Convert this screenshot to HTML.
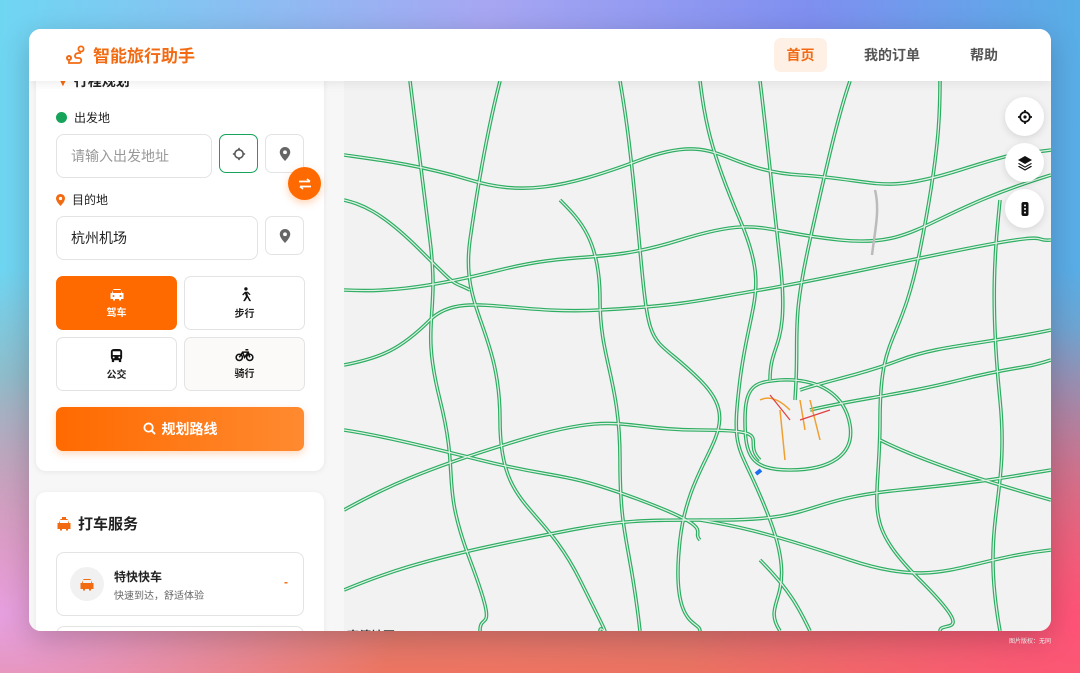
<!DOCTYPE html>
<html><head><meta charset="utf-8"><style>
*{box-sizing:border-box;margin:0;padding:0}
body{width:1080px;height:673px;overflow:hidden;position:relative;font-family:"Liberation Sans","Noto Sans CJK SC",sans-serif;
background:linear-gradient(180deg,rgba(0,0,0,0) 40%,rgba(245,110,80,.9) 100%),linear-gradient(90deg,#6fd6f2 0%,#a7a6f2 45%,#7f8ff0 75%,#58aee6 100%);}
.bl{position:absolute;left:0;bottom:0;width:400px;height:300px;background:radial-gradient(ellipse at 0% 80%,#e7a0e0 0%,rgba(231,160,224,0) 70%)}
.br{position:absolute;right:0;bottom:0;width:400px;height:350px;background:radial-gradient(ellipse at 100% 85%,#ff5277 0%,rgba(255,82,119,0) 70%)}
.win{position:absolute;left:29px;top:29px;width:1022px;height:602px;border-radius:12px;overflow:hidden;background:#f2f2f2;box-shadow:0 8px 30px rgba(0,0,0,.2)}
.hdr{position:absolute;left:0;top:0;width:100%;height:52px;background:#fff;box-shadow:0 2px 10px rgba(0,0,0,.08);z-index:5}
.logo{position:absolute;left:36px;top:13px;font-size:17px;font-weight:bold;color:#f26b12;display:flex;align-items:center;gap:6px}
.nav{position:absolute;top:9px;height:34px;line-height:34px;font-size:14px;color:#555;font-weight:bold;text-align:center}
.side{position:absolute;left:0;top:0;width:315px;height:100%;background:#f7f7f7;z-index:2}
.card{position:absolute;left:7px;width:288px;background:#fff;border-radius:10px;box-shadow:0 1px 6px rgba(0,0,0,.07)}
.lbl{position:absolute;font-size:12px;color:#222;display:flex;align-items:center;gap:7px}
.inp{position:absolute;height:44px;border:1px solid #e3e3e3;border-radius:8px;font-size:14px;line-height:42px;padding-left:14px;color:#222}
.ib{position:absolute;width:39px;height:39px;border:1px solid #e3e3e3;border-radius:7px;display:flex;align-items:center;justify-content:center}
.mode{position:absolute;width:121px;height:54px;border:1px solid #e3e3e3;border-radius:7px;font-size:10px;font-weight:bold;text-align:center;color:#222;padding-top:10px}
.mode svg{display:block;margin:0 auto 3px}
.fab{position:absolute;width:39px;height:39px;border-radius:50%;background:#fff;box-shadow:0 2px 8px rgba(0,0,0,.12);display:flex;align-items:center;justify-content:center;z-index:3}
</style></head><body>
<div class="bl"></div><div class="br"></div>
<div style="position:absolute;left:1009px;top:636px;font-size:6px;color:#fff">图片版权：无同</div>
<div class="win">
<svg style="position:absolute;left:0;top:0" width="1022" height="602" viewBox="29 29 1022 602">
<defs>
<g id="r" fill="none">
<path d="M344,155 C380,160 420,165 470,180 S560,190 640,160 S720,170 800,175 S880,195 960,170 S1020,155 1051,150"/>
<path d="M344,290 C380,292 420,290 500,270 S600,265 680,240 S760,232 840,240 S920,215 1051,175"/>
<path d="M344,365 C380,358 400,350 430,320 S510,315 600,310 S700,300 760,290 S860,270 960,250 S1030,242 1051,240"/>
<path d="M344,510 C380,490 420,470 520,440 S620,430 700,430 S740,440 760,460"/>
<path d="M344,590 C380,575 420,560 520,540 S620,520 720,520 S800,500 900,490 S1000,478 1051,470"/>
<path d="M700,520 C730,525 760,530 850,560 S960,560 1051,550"/>
<path d="M410,81 C415,120 420,160 430,240 S420,320 440,400 S440,480 470,560 S480,610 480,631"/>
<path d="M500,81 C490,120 480,170 470,240 S500,330 500,420 S540,500 580,580 S600,620 600,631"/>
<path d="M620,81 C625,110 630,140 640,250 S650,330 700,380 S690,450 680,540 S700,620 700,631"/>
<path d="M700,81 C705,120 710,150 740,220 S750,300 740,380 S740,440 770,520 S760,600 780,631"/>
<path d="M940,81 C940,110 940,150 920,250 S880,330 880,420 S860,520 920,580 S940,620 940,631"/>
<path d="M850,81 C840,110 830,150 810,240 S800,330 795,400"/>
<path d="M760,81 C765,120 770,170 780,260 S770,340 770,380"/>
<path d="M1000,200 C995,250 990,300 1000,400 S980,520 1000,631"/>
<path d="M780,380 C820,378 845,395 850,425 S830,470 790,470 S745,455 745,420 S755,382 780,380"/>
<path d="M344,430 C370,434 400,440 480,460 S560,470 640,500 S690,530 700,540"/>
<path d="M344,200 C360,204 380,210 420,250 S450,280 470,290"/>
<path d="M560,200 C580,220 600,240 600,300 S620,380 620,460 S630,540 640,631"/>
<path d="M800,390 C830,380 860,375 900,360 S980,345 1051,330"/>
<path d="M810,410 C850,400 900,395 960,380 S1020,370 1051,360"/>
<path d="M760,560 C790,590 800,610 810,631"/>
<path d="M880,440 C920,460 980,480 1051,500"/>
</g>
</defs>
<rect x="29" y="29" width="1022" height="602" fill="#f2f2f2"/>
<use href="#r" stroke="#2eae63" stroke-width="3.6"/>
<use href="#r" stroke="#e4f1e7" stroke-width="1.2"/>
<path d="M875,190 C880,210 875,230 872,255" stroke="#bbb" stroke-width="2.5" fill="none"/>
<path d="M760,400 C770,395 780,400 790,410 M780,410 L785,460 M800,400 L805,430 M810,400 L820,440" stroke="#f0a030" stroke-width="1.5" fill="none"/>
<path d="M770,395 L790,420 M800,420 L830,410" stroke="#e04040" stroke-width="1.2" fill="none"/>
<path d="M756,474 L761,470" stroke="#1a6ef0" stroke-width="4"/>
</svg>
<div style="position:absolute;left:318px;top:598px;font-size:12px;color:#333;font-weight:bold;z-index:1">高德地图</div>
<div class="fab" style="left:976px;top:68px"><svg width="16" height="16" viewBox="0 0 16 16"><circle cx="8" cy="8" r="4.8" stroke="#111" stroke-width="1.8" fill="none"/><circle cx="8" cy="8" r="1.6" fill="#111"/><path d="M8 1v3M8 12v3M1 8h3M12 8h3" stroke="#111" stroke-width="1.8"/></svg></div>
<div class="fab" style="left:976px;top:114px"><svg width="16" height="16" viewBox="0 0 16 16"><path d="M8 1L15 5 8 9 1 5z" fill="#111"/><path d="M2 8l6 3.5L14 8l1 .8-7 4-7-4z" fill="#111"/><path d="M2 10.8l6 3.5 6-3.5 1 .8-7 4-7-4z" fill="#111"/></svg></div>
<div class="fab" style="left:976px;top:160px"><svg width="16" height="16" viewBox="0 0 16 16"><rect x="4.5" y="1" width="7" height="14" rx="2" fill="#111"/><circle cx="8" cy="4.5" r="1" fill="#fff"/><circle cx="8" cy="8" r="1" fill="#fff"/><circle cx="8" cy="11.5" r="1" fill="#fff"/></svg></div>
<div class="side">
 <div class="card" style="top:0;height:442px">
  <div style="position:absolute;left:20px;top:42px;font-size:14px;font-weight:bold;color:#222"><span style="color:#f26b12">▼</span> 行程规划</div>
  <div class="lbl" style="left:20px;top:80px"><span style="width:11px;height:11px;border-radius:50%;background:#16a35a;display:inline-block"></span>出发地</div>
  <div class="inp" style="left:20px;top:105px;width:156px;color:#999">请输入出发地址</div>
  <div class="ib" style="left:183px;top:105px;border-color:#16a35a"><svg width="14" height="14" viewBox="0 0 16 16"><circle cx="8" cy="8" r="4.8" stroke="#555" stroke-width="1.8" fill="none"/><path d="M8 1v3M8 12v3M1 8h3M12 8h3" stroke="#555" stroke-width="1.8"/></svg></div>
  <div class="ib" style="left:229px;top:105px"><svg width="12" height="14" viewBox="0 0 12 16"><path d="M6 0C2.7 0 0 2.6 0 6c0 4 6 10 6 10s6-6 6-10C12 2.6 9.3 0 6 0z" fill="#666"/><circle cx="6" cy="6" r="2.2" fill="#fff"/></svg></div>
  <div class="lbl" style="left:20px;top:162px"><svg width="9" height="12" viewBox="0 0 12 16"><path d="M6 0C2.7 0 0 2.6 0 6c0 4 6 10 6 10s6-6 6-10C12 2.6 9.3 0 6 0z" fill="#f26b12"/><circle cx="6" cy="6" r="2.2" fill="#fff"/></svg>目的地</div>
  <div class="inp" style="left:20px;top:187px;width:202px">杭州机场</div>
  <div class="ib" style="left:229px;top:187px"><svg width="12" height="14" viewBox="0 0 12 16"><path d="M6 0C2.7 0 0 2.6 0 6c0 4 6 10 6 10s6-6 6-10C12 2.6 9.3 0 6 0z" fill="#666"/><circle cx="6" cy="6" r="2.2" fill="#fff"/></svg></div>
  <div class="mode" style="left:20px;top:247px;background:#ff6a00;border-color:#ff6a00;color:#fff"><svg width="16" height="14" viewBox="0 0 16 14"><path d="M3 6l1.5-4h7L13 6h1.5v6h-2.5v1.5h-2V12H6v1.5H4V12H1.5V6z" fill="#fff"/><rect x="4" y="3" width="8" height="3" fill="#ff6a00"/><circle cx="4.5" cy="9" r="1" fill="#ff6a00"/><circle cx="11.5" cy="9" r="1" fill="#ff6a00"/></svg>驾车</div>
  <div class="mode" style="left:148px;top:247px"><svg width="14" height="15" viewBox="0 0 14 16"><circle cx="8" cy="2" r="1.8" fill="#111"/><path d="M7 5L4 8l1 1 2-2 1 3-3 5h2l2.5-4 2 4h2L10 9 9.5 6l2 2.5 1.5-.5L10 5z" fill="#111"/></svg>步行</div>
  <div class="mode" style="left:20px;top:308px"><svg width="15" height="15" viewBox="0 0 16 16"><rect x="2" y="1" width="12" height="12" rx="3" fill="#111"/><rect x="4" y="3.5" width="8" height="4" fill="#fff"/><circle cx="5" cy="10" r="1" fill="#fff"/><circle cx="11" cy="10" r="1" fill="#fff"/><rect x="3" y="12" width="2.5" height="3" fill="#111"/><rect x="10.5" y="12" width="2.5" height="3" fill="#111"/></svg>公交</div>
  <div class="mode" style="left:148px;top:308px;background:#fcfaf8"><svg width="19" height="14" viewBox="0 0 20 14"><circle cx="4.5" cy="9.5" r="3.3" stroke="#111" stroke-width="1.6" fill="none"/><circle cx="15.5" cy="9.5" r="3.3" stroke="#111" stroke-width="1.6" fill="none"/><path d="M4.5 9.5L8 4h6l1.5 5.5M8 4L10 9.5 14 4M11 1.5h3" stroke="#111" stroke-width="1.6" fill="none"/></svg>骑行</div>
  <div style="position:absolute;left:20px;top:378px;width:248px;height:44px;border-radius:7px;background:linear-gradient(90deg,#ff6a00,#ff8a30);color:#fff;font-size:14px;font-weight:bold;text-align:center;line-height:44px;box-shadow:0 3px 8px rgba(255,106,0,.25)"><svg width="13" height="13" viewBox="0 0 14 14" style="vertical-align:-1px;margin-right:6px"><circle cx="6" cy="6" r="4.5" stroke="#fff" stroke-width="2" fill="none"/><path d="M9.5 9.5L13 13" stroke="#fff" stroke-width="2"/></svg>规划路线</div>
 </div>
 <div class="card" style="top:463px;height:160px">
  <div style="position:absolute;left:20px;top:21px;font-size:15px;font-weight:bold;color:#222;display:flex;align-items:center;gap:6px"><svg width="16" height="14" viewBox="0 0 16 14"><path d="M6 0h4v2H6z" fill="#f26b12"/><path d="M3 6l1.5-4h7L13 6h1.5v6h-2.5v1.5h-2V12H6v1.5H4V12H1.5V6z" fill="#f26b12"/><rect x="4" y="3" width="8" height="3" fill="#fff"/></svg>打车服务</div>
  <div style="position:absolute;left:20px;top:60px;width:248px;height:64px;border:1px solid #e3e3e3;border-radius:8px">
   <div style="position:absolute;left:13px;top:14px;width:34px;height:34px;border-radius:50%;background:#f1f1f1;display:flex;align-items:center;justify-content:center"><svg width="16" height="14" viewBox="0 0 16 14"><path d="M3 6l1.5-4h7L13 6h1.5v6h-2.5v1.5h-2V12H6v1.5H4V12H1.5V6z" fill="#f26b12"/><rect x="4" y="3" width="8" height="3" fill="#f1f1f1"/></svg></div>
   <div style="position:absolute;left:57px;top:15px;font-size:12px;font-weight:bold;color:#222">特快快车</div>
   <div style="position:absolute;left:57px;top:34px;font-size:10px;color:#666">快速到达，舒适体验</div>
   <div style="position:absolute;left:227px;top:22px;font-size:12px;color:#f26b12;font-weight:bold">-</div>
  </div>
  <div style="position:absolute;left:20px;top:134px;width:248px;height:30px;border:1px solid #e3e3e3;border-radius:8px"></div>
 </div>
</div>
<div style="position:absolute;left:259px;top:138px;width:33px;height:33px;border-radius:50%;background:#ff6a00;z-index:4;box-shadow:0 3px 8px rgba(255,106,0,.3);display:flex;align-items:center;justify-content:center"><svg width="14" height="12" viewBox="0 0 14 12"><path d="M1 3.5h11M9 1l3 2.5M13 8.5H2M5 11L2 8.5" stroke="#fff" stroke-width="1.7" fill="none"/></svg></div>
<div class="hdr">
 <div class="logo"><svg width="22" height="20" viewBox="0 0 22 20"><circle cx="4" cy="13" r="3" fill="#f26b12"/><circle cx="4" cy="13" r="1" fill="#fff"/><circle cx="16" cy="4" r="2.6" stroke="#f26b12" stroke-width="1.8" fill="none"/><path d="M4 16v2h10c3 0 3-5 0-5h-2c-3 0-3-5 2-5h2" stroke="#f26b12" stroke-width="1.8" fill="none"/></svg>智能旅行助手</div>
 <div class="nav" style="left:745px;width:53px;background:#fff0e6;border-radius:7px;color:#f26b12">首页</div>
 <div class="nav" style="left:830px;width:66px">我的订单</div>
 <div class="nav" style="left:935px;width:40px">帮助</div>
</div>
</div>
</body></html>
